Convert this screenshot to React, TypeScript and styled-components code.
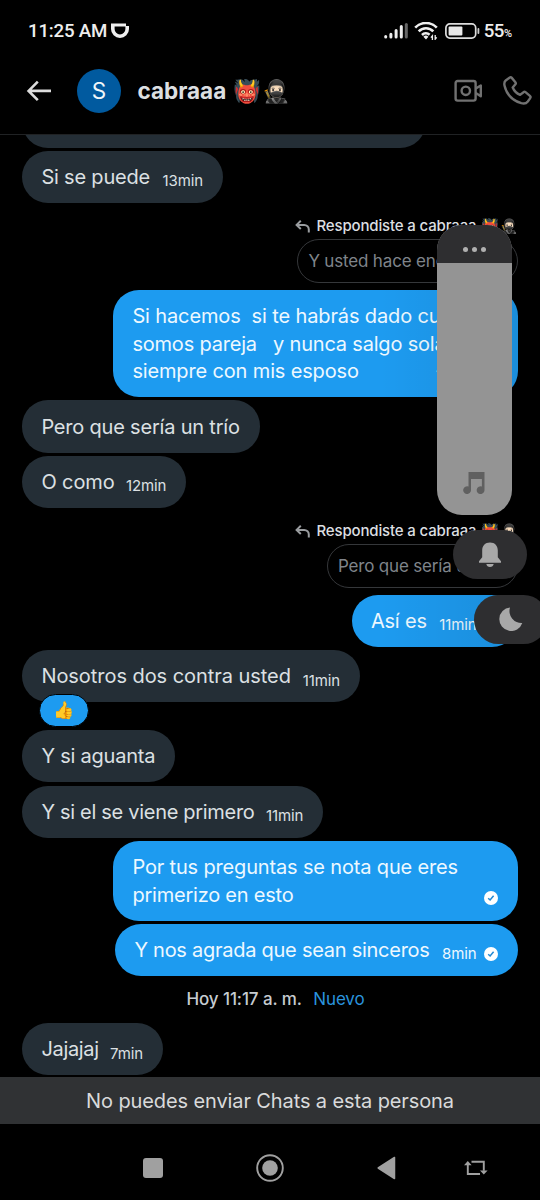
import React from 'react';
import styled, { createGlobalStyle } from 'styled-components';

const GlobalStyle = createGlobalStyle`
  * { box-sizing: border-box; }
  body { margin: 0; background: #000; overflow: hidden; }
`;

const Screen = styled.div`
  position: relative;
  display: flex;
  flex-direction: column;
  width: 540px;
  height: 1200px;
  overflow: hidden;
  background: #000;
  color: #dcdfe1;
  font-family: Inter, 'Noto Sans', sans-serif;
`;

const StatusBar = styled.div`
  display: flex;
  align-items: center;
  height: 62px;
  padding: 0 28px;
  color: #eee;
  font: 500 18.7px Roboto, sans-serif;
  svg { display: block; }
`;
const Clock = styled.span`
  width: 83px;
  letter-spacing: -0.2px;
  white-space: nowrap;
`;
const StatusIcons = styled.div`
  display: flex;
  align-items: center;
  margin-left: auto;
`;
const Percent = styled.span`
  margin-left: 4px;
  letter-spacing: -0.6px;
  small { font-size: 11px; letter-spacing: 0; }
`;

const Header = styled.header`
  display: flex;
  align-items: center;
  height: 73px;
  padding: 0 8px 15px 26px;
  border-bottom: 1px solid #202224;
  svg { display: block; flex: none; }
`;
const Avatar = styled.div`
  display: flex;
  align-items: center;
  justify-content: center;
  width: 44px;
  height: 44px;
  margin-left: 25px;
  border-radius: 50%;
  background: #015a9f;
  color: #f2f6f9;
  font-size: 22.5px;
`;
const Name = styled.h1`
  display: flex;
  align-items: center;
  flex: 1;
  margin: 1px 0 0 16.5px;
  font-size: 22.5px;
  font-weight: 700;
  line-height: 30px;
`;
const NameEmoji = styled.span`
  margin-left: 7px;
  font-size: 22.3px;
  letter-spacing: 0.9px;
  font-weight: 400;
`;
const CallActions = styled.div`
  display: flex;
  align-items: center;
  gap: 20px;
`;

const Chat = styled.main`
  display: flex;
  flex-direction: column;
  justify-content: flex-end;
  height: 942px;
  padding: 0 22px 1.6px;
  overflow: hidden;
`;

const Bubble = styled.div<{ $mine?: boolean; $width: number; $gap?: number }>`
  position: relative;
  display: flex;
  flex: none;
  align-items: flex-end;
  justify-content: space-between;
  align-self: ${p => (p.$mine ? 'flex-end' : 'flex-start')};
  width: ${p => p.$width}px;
  min-height: 52.2px;
  margin-top: ${p => p.$gap ?? 3.3}px;
  padding: 13.2px 20px 11.4px 19.4px;
  border-radius: 26px;
  background: ${p => (p.$mine ? '#1d9bf0' : '#242e36')};
  color: ${p => (p.$mine ? '#edf8ff' : '#dce0e3')};
`;
const Message = styled.div<{ $ls?: number }>`
  font-size: 20px;
  line-height: 27.6px;
  letter-spacing: ${p => p.$ls ?? -0.2}px;
  white-space: pre;
`;
const Line = styled.div<{ $ls: number }>`
  letter-spacing: ${p => p.$ls}px;
`;
const Meta = styled.div<{ $overlap?: boolean }>`
  display: flex;
  align-items: center;
  gap: 7px;
  height: 22px;
  margin-left: ${p => (p.$overlap ? -40 : 0)}px;
  font-size: 15px;
  letter-spacing: -0.1px;
  white-space: nowrap;
  svg { display: block; margin-right: 0.5px; }
`;

const ReplyNote = styled.div`
  display: flex;
  flex: none;
  align-items: center;
  align-self: flex-end;
  height: 22px;
  margin: 11px -1px 0 0;
  color: #dcdfe1;
  font-size: 15px;
  font-weight: 500;
  letter-spacing: -0.15px;
  white-space: pre;
  svg { margin: 2px 6px 0 0; }
`;
const NoteEmoji = styled.span`
  margin-left: 5px;
  font-size: 14.2px;
  letter-spacing: 0.8px;
`;
const Quote = styled.div<{ $width: number }>`
  flex: none;
  align-self: flex-end;
  width: ${p => p.$width}px;
  height: 43.4px;
  margin: 3.4px 0 3.6px;
  padding-left: 10.4px;
  border: 1.3px solid #35373a;
  border-radius: 22px;
  overflow: hidden;
  color: #7f848a;
  font-size: 17px;
  line-height: 42.4px;
  letter-spacing: -0.17px;
  white-space: nowrap;
`;

const Reaction = styled.div`
  position: absolute;
  left: 16.6px;
  top: 44px;
  display: flex;
  align-items: center;
  justify-content: center;
  width: 50px;
  height: 33px;
  border: 1.5px solid #000;
  border-radius: 17px;
  background: #1d9bf0;
  font-size: 17px;
  line-height: 1;
`;

const DateLine = styled.div`
  display: flex;
  flex: none;
  justify-content: center;
  gap: 11.4px;
  height: 46.9px;
  padding-left: 11px;
  color: #c6cbd0;
  font-size: 17px;
  font-weight: 500;
  line-height: 47px;
  letter-spacing: -0.1px;
`;
const Fresh = styled.span`
  color: #2a93dd;
  font-weight: 400;
`;

const Notice = styled.div`
  flex: none;
  height: 47px;
  background: #303234;
  color: #d9dadb;
  font-size: 20px;
  line-height: 48px;
  letter-spacing: -0.11px;
  text-align: center;
`;
const NavBar = styled.nav`
  display: flex;
  align-items: center;
  flex: 1;
  padding: 11px 0 0 143px;
  svg { display: block; }
`;
const NavItem = styled.div<{ $gap?: number }>`
  margin-left: ${p => p.$gap ?? 0}px;
`;

const VolumePanel = styled.div`
  position: absolute;
  left: 436.6px;
  top: 225px;
  display: flex;
  flex-direction: column;
  width: 75px;
  height: 290px;
  border-radius: 25px;
  overflow: hidden;
  background: #949494;
`;
const VolumeTop = styled.div`
  display: flex;
  align-items: center;
  justify-content: center;
  gap: 4px;
  height: 38.4px;
  padding-top: 10px;
  background: #2e2e30;
`;
const Dot = styled.i`
  width: 5px;
  height: 5px;
  border-radius: 50%;
  background: #b0b0b0;
`;
const VolumeFoot = styled.div`
  display: flex;
  justify-content: center;
  margin: auto 1px 21px 0;
  svg { display: block; }
`;
const Pill = styled.div<{ $x: number; $y: number }>`
  position: absolute;
  left: ${p => p.$x}px;
  top: ${p => p.$y}px;
  display: flex;
  align-items: center;
  justify-content: center;
  width: 74.6px;
  height: 49.4px;
  border-radius: 25px;
  background: #2e2e30;
`;
const SideShade = styled.div<{ $y: number; $h: number }>`
  position: absolute;
  left: 380px;
  top: ${p => p.$y}px;
  width: 160px;
  height: ${p => p.$h}px;
  background: linear-gradient(90deg, transparent, rgba(0, 0, 0, 0.1));
`;

const Check = () => (
  <svg width="14" height="14" viewBox="0 0 14 14">
    <circle cx="7" cy="7" r="7" fill="#fff" />
    <path d="M4.2 7.2 6.1 9 9.6 4.8" fill="none" stroke="#2389d3" strokeWidth="1.5" />
  </svg>
);

const ReplyArrow = () => (
  <svg width="15" height="13" viewBox="0 0 15 13" fill="none" stroke="#999c9f" strokeWidth="2">
    <path d="M5.8.8 1.6 4.9 5.8 9M1.8 4.9h7.4a4.6 4.6 0 0 1 4.6 4.6v3" />
  </svg>
);

const ReplyTo = () => (
  <ReplyNote>
    <ReplyArrow />
    Respondiste a cabraaa
    <NoteEmoji>👹🥷🏻</NoteEmoji>
  </ReplyNote>
);

export default function App() {
  return (
    <Screen>
      <GlobalStyle />
      <StatusBar>
        <Clock>11:25 AM</Clock>
        <svg width="18" height="16" viewBox="0 0 18 16" fill="#eee" fillRule="evenodd">
          <path d="M0 .5h15v2.600h3V6A9 9 0 0 1 0 6ZM3.600 3.500V6a5.400 5.400 0 0 0 10.800 0V3.500Z" />
        </svg>
        <StatusIcons>
          <svg width="24" height="16" viewBox="0 0 24 16" strokeWidth="3" strokeLinecap="round" stroke="#eee">
            <path d="M1.7 13.6v.4M6.9 11.3v2.7M12.1 7.6v6.4M17.3 3.6v10.4" />
            <path d="M22.3 1.6v12.4" stroke="#666" />
          </svg>
          <svg width="30" height="18" viewBox="-6 0 30 18" fill="none" stroke="#eee" strokeWidth="2.6">
            <path d="M1.2 5.6a15 15 0 0 1 21.6 0M4.7 9.4a10 10 0 0 1 14.6 0M8 13a5.6 5.6 0 0 1 7.6-.2" />
            <path d="m9.4 14.8 2.6 2.8 2.4-2.8a3.600 3.600 0 0 0-5 0Z" fill="#eee" stroke="none" />
            <path d="M18.4 18v-4.2l-1.500 1.800M21.200 13v4.200l1.500-1.800" strokeWidth="1.3" />
          </svg>
          <svg width="42" height="16" viewBox="-7 0 42 16">
            <rect x=".9" y=".9" width="29.8" height="14.2" rx="4" fill="none" stroke="#ddd" strokeWidth="1.7" />
            <rect x="3.6" y="3.4" width="13.8" height="9.2" rx="1" fill="#e8e8e8" />
            <path d="M33.4 6v4" stroke="#ccc" strokeWidth="1.8" strokeLinecap="round" />
          </svg>
          <Percent>55<small>%</small></Percent>
        </StatusIcons>
      </StatusBar>

      <Header>
        <svg width="26" height="22" viewBox="0 0 26 22" fill="none" stroke="#dcdcdc" strokeWidth="2.6">
          <path d="M11.8 1.7 2.6 10.9l9.2 9.2M3 10.9h22" />
        </svg>
        <Avatar>S</Avatar>
        <Name>
          cabraaa
          <NameEmoji>👹🥷🏻</NameEmoji>
        </Name>
        <CallActions>
          <svg width="29" height="24" viewBox="0 0 29 24" fill="none" stroke="#717171" strokeWidth="2.4" strokeLinejoin="round">
            <rect x="1.6" y="2" width="20" height="19.6" rx="2" />
            <circle cx="11.8" cy="11.8" r="4.2" />
            <path d="m21.8 9.600 5-3.200v10.800l-5-3.200" />
          </svg>
          <svg width="29" height="30" viewBox="0 0 29 30" fill="none" stroke="#717171" strokeWidth="2.4" strokeLinejoin="round">
            <path d="M2.7 4.5 6.5 1.7c.8-.6 1.7-.5 2.3.2l3.6 4.300c.5.6.5 1.400 0 2L9.700 11.500c1.400 3.400 4 6 7.400 7.400l3.400-2.700c.6-.5 1.400-.5 2 0l4.400 3.700c.7.6.8 1.500.3 2.200l-2.400 3.400c-1.500 2-4 2.400-6.500 1.700C9.800 24.500 3.500 18.500 1.500 9.500 1.100 7.500 1.200 5.700 2.700 4.500Z" />
          </svg>
        </CallActions>
      </Header>

      <Chat>
        <Bubble $width={404} />
        <Bubble $width={201}>
          <Message $ls={-0.2}>Si se puede</Message>
          <Meta>13min</Meta>
        </Bubble>

        <ReplyTo />
        <Quote $width={221}>Y usted hace encuentros</Quote>
        <Bubble $mine $width={405}>
          <Message>
            <Line $ls={-0.13}>{'Si hacemos  si te habrás dado cu'}</Line>
            <Line $ls={-0.2}>{'somos pareja   y nunca salgo sola'}</Line>
            <Line $ls={-0.15}>siempre con mis esposo</Line>
          </Message>
          <Meta $overlap>12min <Check /></Meta>
        </Bubble>
        <Bubble $width={238}>
          <Message $ls={-0.2}>Pero que sería un trío</Message>
        </Bubble>
        <Bubble $width={164.4}>
          <Message $ls={-0.1}>O como</Message>
          <Meta>12min</Meta>
        </Bubble>

        <ReplyTo />
        <Quote $width={191.5}>Pero que sería un trío</Quote>
        <Bubble $mine $width={166.5}>
          <Message>Así es</Message>
          <Meta>11min <Check /></Meta>
        </Bubble>
        <Bubble $width={338}>
          <Message $ls={-0.05}>Nosotros dos contra usted</Message>
          <Meta>11min</Meta>
          <Reaction>👍</Reaction>
        </Bubble>
        <Bubble $width={153} $gap={27.7}>
          <Message $ls={-0.22}>Y si aguanta</Message>
        </Bubble>
        <Bubble $width={301.3}>
          <Message $ls={-0.3}>Y si el se viene primero</Message>
          <Meta>11min</Meta>
        </Bubble>
        <Bubble $mine $width={405}>
          <Message>
            <Line $ls={-0.16}>Por tus preguntas se nota que eres</Line>
            <Line $ls={-0.22}>primerizo en esto</Line>
          </Message>
          <Meta><Check /></Meta>
        </Bubble>
        <Bubble $mine $width={403}>
          <Message $ls={-0.26}>Y nos agrada que sean sinceros</Message>
          <Meta>8min <Check /></Meta>
        </Bubble>
        <DateLine>
          Hoy 11:17 a. m. <Fresh>Nuevo</Fresh>
        </DateLine>
        <Bubble $width={141} $gap={0}>
          <Message $ls={-0.33}>Jajajaj</Message>
          <Meta>7min</Meta>
        </Bubble>
      </Chat>

      <Notice>No puedes enviar Chats a esta persona</Notice>
      <NavBar>
        <NavItem>
          <svg width="20" height="20"><rect width="20" height="20" rx="3" fill="#a0a0a0" /></svg>
        </NavItem>
        <NavItem $gap={92.5}>
          <svg width="28" height="28" viewBox="0 0 28 28">
            <circle cx="14" cy="14" r="12.8" fill="none" stroke="#a0a0a0" strokeWidth="1.9" />
            <circle cx="14" cy="14" r="7.8" fill="#a0a0a0" />
          </svg>
        </NavItem>
        <NavItem $gap={93}>
          <svg width="19" height="24" viewBox="0 0 19 24">
            <path d="M17.5 1.5v21L1.2 12Z" fill="#a0a0a0" stroke="#a0a0a0" strokeWidth="1.5" strokeLinejoin="round" />
          </svg>
        </NavItem>
        <NavItem $gap={68}>
          <svg width="24" height="16" viewBox="0 0 24 16" fill="none" stroke="#a0a0a0" strokeWidth="1.9">
            <path d="M7.5 1.8h12.3v9M16 14H3.800V5" />
            <path d="M0 5.200 3.800 1 7.600 5.200ZM16 10.400h7.600l-3.800 4.200Z" fill="#a0a0a0" stroke="none" />
          </svg>
        </NavItem>
      </NavBar>

      <SideShade $y={290} $h={107} />
      <SideShade $y={594} $h={53} />
      <VolumePanel>
        <VolumeTop><Dot /><Dot /><Dot /></VolumeTop>
        <VolumeFoot>
          <svg width="22" height="22" viewBox="0 0 22 22" fill="#606060">
            <path d="M5.500 0h16v18.200a3.900 3.900 0 1 1-2.600-3.700V7H8v11.200a3.900 3.900 0 1 1-2.500-3.700Z" />
          </svg>
        </VolumeFoot>
      </VolumePanel>
      <Pill $x={452.8} $y={530}>
        <svg width="24" height="26" viewBox="0 0 24 26" fill="#a8a8a8">
          <path d="M12 .5c5 0 7.800 3.400 7.800 8v6.800l3.200 4v1.500H1v-1.500l3.200-4V8.500c0-4.600 2.800-8 7.800-8ZM8.300 22h7.400a3.800 3.800 0 0 1-7.400 0Z" />
        </svg>
      </Pill>
      <Pill $x={473.5} $y={594.7}>
        <svg width="24" height="24" viewBox="0 0 24 24" fill="#a8a8a8">
          <path d="M11 .5A12 12 0 0 0 23.300 16 11.800 11.800 0 1 1 11 .5Z" />
        </svg>
      </Pill>
    </Screen>
  );
}
